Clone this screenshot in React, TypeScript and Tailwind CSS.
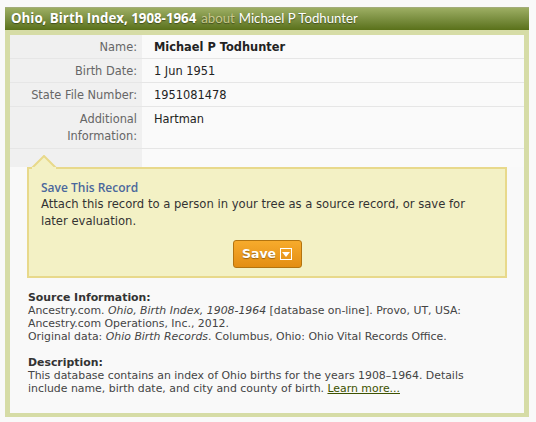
export default function App() {
  const rows = [
    { label: "Name:", value: "Michael P Todhunter", bold: true },
    { label: "Birth Date:", value: "1 Jun 1951" },
    { label: "State File Number:", value: "1951081478" },
  ]

  return (
    <div className="w-[536px] h-[422px] bg-[#f9f9f9] pt-[7px] px-[5px] font-['DejaVu_Sans',sans-serif] text-[11.4px] text-[#333]">
      <div className="w-[524px] bg-[#d6dca6]">
        <div className="h-[23px] border-t border-[#a3ad7a] bg-gradient-to-b from-[#9dae63] to-[#5a7119] px-[6px] flex items-center text-white whitespace-nowrap [text-shadow:0_1px_1px_rgba(0,0,0,0.4)]">
          <span className="font-bold font-['Open_Sans',sans-serif] text-[13.3px]">Ohio, Birth Index, 1908-1964</span>
          <span className="ml-[5px] text-[#c9c98e] font-['Lato',sans-serif] text-[13.2px]">about</span>
          <span className="ml-[4px] font-['Lato',sans-serif] text-[13.2px]">Michael P Todhunter</span>
        </div>
        <div className="px-[5px] pt-[5px] pb-[4px]">
          <div className="bg-[#f9f9f9] pb-[18px]">
            <div className="grid grid-cols-[132px_1fr]">
              {rows.map((r) => (
                <div key={r.label} className="contents">
                  <div className="bg-[#f0f0f0] h-[24px] pt-[3px] flex items-center justify-end pr-[5px] text-[#666] border-b border-[#e6e6e6]">
                    {r.label}
                  </div>
                  <div className={`bg-[#fafafa] h-[24px] pt-[3px] flex items-center pl-[12px] text-[#222] border-b border-[#e6e6e6] ${r.bold ? "font-bold" : ""}`}>
                    {r.value}
                  </div>
                </div>
              ))}
              <div className="bg-[#f0f0f0] h-[42px] pt-[4px] pr-[5px] text-right text-[#666] leading-[17px] border-b border-[#e6e6e6]">
                Additional
                <br />
                Information:
              </div>
              <div className="bg-[#fafafa] h-[42px] pt-[4px] pl-[12px] text-[#222] leading-[17px] border-b border-[#e6e6e6]">
                Hartman
              </div>
              <div className="bg-[#f0f0f0] h-[18px]" />
              <div className="bg-[#fafafa] h-[18px]" />
            </div>

            <div className="relative mx-[17px] bg-[#f3f1c5] border-2 border-[#e8d98b] pl-[12px] pr-[24px] pt-[11px] pb-[8px]">
              <svg className="absolute left-[1px] top-[-14px]" width="28" height="14" viewBox="0 0 28 14">
                <polygon points="1,14 14,1 27,14" fill="#f3f1c5" stroke="#e8d98b" strokeWidth="2" />
                <rect x="2" y="12" width="24" height="4" fill="#f3f1c5" />
              </svg>
              <div className="font-['Open_Sans',sans-serif] text-[12px] font-semibold text-[#4a679c] leading-[16px]">
                Save This Record
              </div>
              <div className="leading-[17px] text-[11.6px] text-[#333]">
                Attach this record to a person in your tree as a source record, or save for later evaluation.
              </div>
              <div className="flex justify-center mt-[10px] pl-[12px]">
                <button className="h-[28px] w-[69px] rounded-[3px] border border-[#b3740f] bg-gradient-to-b from-[#f7ab2c] to-[#e38e12] flex items-center justify-center gap-[4px] text-white font-bold text-[12.5px] [text-shadow:0_1px_1px_rgba(0,0,0,0.35)]">
                  <span>Save</span>
                  <span className="w-[12px] h-[12px] border border-white flex items-center justify-center">
                    <svg width="8" height="5" viewBox="0 0 8 5">
                      <polygon points="0,0 8,0 4,5" fill="#fff" />
                    </svg>
                  </span>
                </button>
              </div>
            </div>

            <div className="px-[18px] mt-[13px] leading-[13px] text-[10.9px] text-[#444]">
              <div className="font-bold text-[#333]">Source Information:</div>
              <div>
                Ancestry.com. <i>Ohio, Birth Index, 1908-1964</i> [database on-line]. Provo, UT, USA: Ancestry.com Operations, Inc., 2012.
              </div>
              <div>
                Original data: <i>Ohio Birth Records</i>. Columbus, Ohio: Ohio Vital Records Office.
              </div>
              <div className="font-bold text-[#333] mt-[13px]">Description:</div>
              <div>
                This database contains an index of Ohio births for the years 1908–1964. Details include name, birth date, and city and county of birth.{" "}
                <a href="#" className="underline text-[#3d5200]">Learn more...</a>
              </div>
            </div>
          </div>
        </div>
      </div>
    </div>
  )
}
